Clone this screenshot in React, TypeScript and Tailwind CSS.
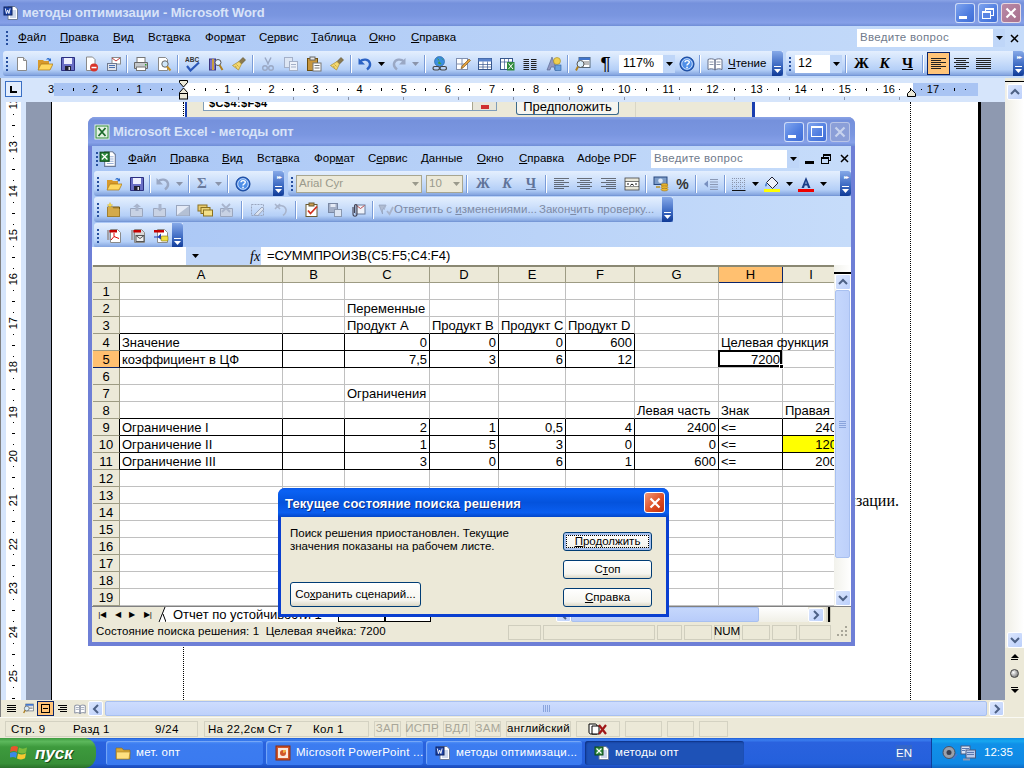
import React from 'react';

const toolbarBg = 'bg-[linear-gradient(to_bottom,#e4effe,#cfe1fb_35%,#b4cff7_75%,#85a6e0_95%,#6d8fd0)]';
const menuBg = 'bg-[linear-gradient(to_right,#a9c6f5,#c6dcfa)]';
const titleBg = 'bg-[linear-gradient(to_bottom,#8aa3e6,#7591dc_12%,#7a96e0_60%,#86a0e8_88%,#6f8dd6)]';
const chevronBg = 'bg-[linear-gradient(to_bottom,#86a9e8,#3f6cc4_55%,#0f3a96)]';
const xpBtn = 'bg-[linear-gradient(to_bottom,#ffffff,#f6f5ef_75%,#dcd8c6)] border border-[#003c74] rounded-[3px]';

const icons: Record<string, React.ReactNode> = {
  doc: (<><path d="M3.5 1.5h6l3 3v10h-9z" fill="#fff" stroke="#8a8a8a" /><path d="M9.5 1.5v3h3" fill="#ddd" stroke="#8a8a8a" /></>),
  open: (<><path d="M1 4h5l1 1h5v3H4l-3 6z" fill="#d89a2c" /><path d="M1 14l3-6h12l-3 6z" fill="#ffd860" stroke="#a8740e" strokeWidth=".7" /><path d="M9 4c1-2.500 3-2.500 4-1l1-1v3.300h-3l1-1.300c-1-.6-2-.5-3 0z" fill="#2f6fcc" /></>),
  save: (<><path d="M1.500 1.500h13v13h-13z" fill="#6a6fc4" stroke="#2b2f80" /><rect x="4" y="2" width="8" height="6" fill="#eef0ff" /><rect x="5" y="10" width="6" height="4.500" fill="#223" /><rect x="8.500" y="11" width="1.500" height="3" fill="#ddd" /></>),
  perm: (<><path d="M3.500 1h6l2.500 2.500v11h-8.500z" fill="#fff" stroke="#8a8a8a" /><circle cx="11" cy="11.500" r="4" fill="#d8342a" /><rect x="8.500" y="10.800" width="5" height="1.500" fill="#fff" /></>),
  mail: (<><rect x="6" y="1.500" width="8.500" height="6.500" fill="#fff" stroke="#8a8a8a" /><path d="M6 2l4 3 4-3" fill="none" stroke="#c04040" /><rect x="1.500" y="7.500" width="9" height="7" fill="#e0e4ec" stroke="#707a90" /><path d="M3 9.500h6M3 11.500h6" stroke="#4a6fb0" /></>),
  print: (<><rect x="4" y="1.500" width="8" height="5" fill="#fff" stroke="#777" /><path d="M1.500 6.500h13v6h-13z" fill="#c4c8cc" stroke="#666" /><rect x="3.500" y="11" width="9" height="3.500" fill="#fff" stroke="#777" /><rect x="12" y="8" width="1.500" height="1.500" fill="#2ca02c" /></>),
  preview: (<><path d="M2.500 1.500h7l2 2v11h-9z" fill="#fff" stroke="#8a8a8a" /><circle cx="9" cy="8" r="3.200" fill="#cfe6fb" stroke="#666" /><path d="M11 10.500l3.500 4" stroke="#c89020" strokeWidth="2" /></>),
  spell: (<><text x="0" y="6" fontSize="6.500" fontWeight="700" fill="#333" fontFamily="Liberation Sans">ABC</text><path d="M2 10l3.500 4.500L14 6.500" fill="none" stroke="#2b57b8" strokeWidth="2.200" /></>),
  research: (<><rect x="1.500" y="3" width="6" height="11" fill="#7a6fc8" stroke="#3c3580" /><rect x="4" y="3" width="2" height="11" fill="#c8a040" /><circle cx="10" cy="6.500" r="3" fill="#e4f0ff" stroke="#555" /><path d="M11.500 9l3 5" stroke="#b08020" strokeWidth="2" /></>),
  brush: (<><path d="M12 1.500l2.500 2.500-4 4-2.500-2.500z" fill="#8a7a50" stroke="#5a4a20" strokeWidth=".6" /><path d="M8 5.500l2.500 2.500-3 6-6-4.500z" fill="#f4d870" stroke="#a88a28" strokeWidth=".7" /><path d="M4 10l2 1.500M5.500 8.500l2 2" stroke="#a88a28" strokeWidth=".6" /></>),
  cut: (<><path d="M5 1.500l3.500 7M11 1.500L7.500 8.500" stroke="#9aa8c4" strokeWidth="1.400" /><circle cx="5" cy="12" r="2.300" fill="none" stroke="#9aa8c4" strokeWidth="1.400" /><circle cx="11" cy="12" r="2.300" fill="none" stroke="#9aa8c4" strokeWidth="1.400" /></>),
  copy: (<><rect x="1.500" y="1.500" width="8" height="10" fill="#dde6f4" stroke="#a4b0c8" /><rect x="6.500" y="5.500" width="8" height="9" fill="#eef2fa" stroke="#a4b0c8" /><path d="M8 8.500h5M8 11h5" stroke="#a4b0c8" /></>),
  paste: (<><rect x="1.500" y="2.500" width="10" height="12" fill="#c8963c" stroke="#6e5010" /><rect x="4" y="1" width="5" height="3" fill="#e8e8e8" stroke="#666" /><rect x="7" y="7" width="8" height="8" fill="#fff" stroke="#777" /><path d="M8.500 9.500h5M8.500 12h5" stroke="#777" /></>),
  undo: (<><path d="M3 5.500c3-3 9-2.500 10 2 .5 2.500-1 4.500-3 6" fill="none" stroke="#2b62c4" strokeWidth="2.400" /><path d="M1.500 2v6.500H8z" fill="#2b62c4" /></>),
  undoOff: (<><path d="M3 5.500c3-3 9-2.500 10 2 .5 2.500-1 4.500-3 6" fill="none" stroke="#9aa8c4" strokeWidth="2.400" /><path d="M1.500 2v6.500H8z" fill="#9aa8c4" /></>),
  redoOff: (<><path d="M13 5.500c-3-3-9-2.500-10 2-.5 2.500 1 4.500 3 6" fill="none" stroke="#9aa8c4" strokeWidth="2.400" /><path d="M14.500 2v6.500H8z" fill="#9aa8c4" /></>),
  link: (<><circle cx="7.500" cy="5.500" r="5" fill="#3a8ee0" stroke="#1c5a9c" strokeWidth=".6" /><path d="M5 2.500c2 0 3 2 1.500 3.500S8 9 9.500 8M8 1.500c1 1 3 1 3.500 3" fill="#40a040" /><rect x="1" y="10.500" width="6.500" height="3.500" rx="1.700" fill="none" stroke="#444" strokeWidth="1.200" /><rect x="8" y="10.500" width="6.500" height="3.500" rx="1.700" fill="none" stroke="#444" strokeWidth="1.200" /></>),
  pencilGrid: (<><rect x="1.500" y="2.500" width="11" height="11" fill="#fff" stroke="#8090b0" /><path d="M1.500 8h11M7 2.500v11" stroke="#8090b0" /><path d="M14 3l1.500 1.500-7 7-2.500 1 1-2.500z" fill="#e0a040" stroke="#7a5010" strokeWidth=".6" /></>),
  table: (<><rect x="1.500" y="2.500" width="13" height="11" fill="#fff" stroke="#36568c" /><rect x="1.500" y="2.500" width="13" height="3" fill="#5a84cc" /><path d="M1.500 8.500h13M1.500 11h13M6 5.500v8M10.500 5.500v8" stroke="#36568c" strokeWidth=".7" /></>),
  xlSmall: (<><rect x="1.500" y="2.500" width="12" height="11" fill="#fff" stroke="#36568c" /><path d="M1.500 6h12M5.500 2.500v11M9.500 2.500v11" stroke="#36568c" strokeWidth=".7" /><rect x="8" y="6" width="7.500" height="8.500" fill="#2f8a3c" /><path d="M9.500 7.500l4.500 5.500M14 7.500L9.500 13" stroke="#fff" /></>),
  columns: (<><path d="M1.500 3.500h5.500M9 3.500h5.500M1.500 5.500h5.500M9 5.500h5.500M1.500 7.500h5.500M9 7.500h5.500M1.500 9.500h5.500M9 9.500h5.500M1.500 11.500h5.500M9 11.500h5.500M1.500 13.500h5.500M9 13.500h5.500" stroke="#222" /></>),
  draw: (<><path d="M6 1L1 14h3l1-3h3l1 3h2z" fill="#9098c0" stroke="#50608c" strokeWidth=".6" /><circle cx="11" cy="5" r="3.500" fill="#f0d050" stroke="#a08820" strokeWidth=".6" /><rect x="9" y="9" width="6" height="5.500" fill="#68a0e0" stroke="#30609c" strokeWidth=".6" /></>),
  map: (<><rect x="4" y="1.500" width="11" height="10" fill="#fff" stroke="#567" /><rect x="4" y="1.500" width="11" height="2.500" fill="#3f74cc" /><path d="M9 6h5M9 8h5" stroke="#777" /><circle cx="5.500" cy="8" r="3.500" fill="#d8ecfa" stroke="#555" /><path d="M3 10.500l-2 4" stroke="#b08020" strokeWidth="2" /></>),
  help: (<><circle cx="8" cy="8" r="7" fill="#2e6fd4" stroke="#123f92" /><circle cx="8" cy="8" r="5.300" fill="#4f8fe8" stroke="#cfe0fa" /><path d="M6 6.300c0-2.300 4.300-2.300 4.300 0 0 1.600-2.300 1.500-2.300 3.200" fill="none" stroke="#fff" strokeWidth="1.400" /><rect x="7.300" y="10.700" width="1.500" height="1.500" fill="#fff" /></>),
  book: (<><path d="M1 3.500c2-1 5-1 7 .5v10c-2-1.500-5-1.500-7-.5zM15 3.500c-2-1-5-1-7 .5v10c2-1.500 5-1.500 7-.5z" fill="#fff" stroke="#66708a" /><path d="M2.500 6h4M2.500 8.500h4M9.500 6h4M9.500 8.500h4" stroke="#8a94aa" /></>),
  folderStar: (<><path d="M1.500 5h12v9.500h-12z" fill="#c09840" stroke="#6e5410" /><path d="M1.500 5h5l1 2h6v7.500h-12z" fill="#d4aa4a" /><path d="M4 .5l.8 2 2 .5-2 .8-.8 2-.8-2-2-.8 2-.5z" fill="#ffe040" stroke="#d0a000" strokeWidth=".3" /></>),
  grayIn: (<><path d="M1.500 6.500h12v8h-12z" fill="#c8d2e4" stroke="#9aa6be" /><path d="M8 1.500L4 5h2.500v4h3V5H12z" fill="#a8b4cc" /></>),
  grayOut: (<><path d="M1.500 6.500h12v8h-12z" fill="#c8d2e4" stroke="#9aa6be" /><path d="M8 9.500L4 6h2.500V2h3v4H12z" fill="#a8b4cc" /></>),
  graySheet: (<><rect x="1.500" y="3.500" width="13" height="10" fill="#e4eaf6" stroke="#9aa6be" /><path d="M2 13l12-9v9.500H2z" fill="#b4c0d4" /></>),
  stack: (<><rect x="1" y="3" width="9" height="6" fill="#e8cc70" stroke="#8a7020" /><rect x="4" y="5.500" width="9" height="6" fill="#ecd478" stroke="#8a7020" /><rect x="6.500" y="8" width="9" height="6" fill="#f4e088" stroke="#8a7020" /></>),
  grayX: (<><path d="M1.500 6.500h12v8h-12z" fill="#c8d2e4" stroke="#9aa6be" /><path d="M3 2l8 8M11 2l-8 8" stroke="#a8b4cc" strokeWidth="1.800" /></>),
  grayEdit: (<><rect x="1.500" y="2.500" width="12" height="11" fill="none" stroke="#9aa6be" strokeDasharray="2 1" /><path d="M4 13l8-8 2 2-6 6.500z" fill="#dde4f0" stroke="#9aa6be" /></>),
  grayUndoX: (<><path d="M3 5.500c3-3 9-2.500 10 2 .5 2.500-1 4.500-3 6" fill="none" stroke="#a8b4cc" strokeWidth="1.600" /><path d="M2 2l5 5M7 2L2 7" stroke="#a8b4cc" strokeWidth="1.500" /></>),
  checkDoc: (<><rect x="2" y="2.500" width="11" height="12" fill="#fff" stroke="#6a5a30" /><rect x="5" y="1" width="5" height="3" fill="#c89a50" stroke="#6a5a30" /><path d="M4 8.500l2.500 3L13 4.500" fill="none" stroke="#d03020" strokeWidth="1.800" /></>),
  saveDoc: (<><rect x="1.500" y="1.500" width="9" height="9" fill="#a4b0c8" stroke="#7a88a4" /><rect x="3.500" y="2" width="5" height="3" fill="#e4eaf6" /><rect x="7.500" y="7.500" width="7" height="7" fill="#dce4f2" stroke="#8a98b0" /></>),
  clipMail: (<><rect x="6" y="3" width="9" height="9" fill="#eef2fa" stroke="#6a7a98" /><path d="M6.500 3.500l4 3 4-3" fill="none" stroke="#c05050" /><path d="M3 5v7c0 3 4 3 4 0V4c0-2-2.500-2-2.500 0v7" fill="none" stroke="#445" strokeWidth="1.100" /></>),
  replyOff: (<><path d="M1 3h7l-3.500 5v4z" fill="#b0bcd2" stroke="#8c98b2" strokeWidth=".6" /><path d="M9 9l2.500 3L15 5" fill="none" stroke="#a8b4cc" strokeWidth="1.800" /><path d="M8 3l-2 5" stroke="#a8b4cc" /></>),
  pdf: (<><path d="M4.500 1.500h7l3 3v10h-10z" fill="#fff" stroke="#8a8a8a" /><rect x="1" y="2" width="10" height="2.500" fill="#c40000" /><rect x="1" y="2" width="2.500" height="10" fill="#a0a0a8" /><path d="M8 5v3.500l-3 3.500M8 8.500l5 2" fill="none" stroke="#e00000" /></>),
  pdfMail: (<><path d="M4.500 1.500h7l3 3v10h-10z" fill="#d8d8d8" stroke="#8a8a8a" /><rect x="1" y="2" width="10" height="2.500" fill="#c40000" /><rect x="1" y="2" width="2.500" height="10" fill="#a0a0a8" /><rect x="6" y="7.500" width="8" height="6" fill="#eee" stroke="#555" /><path d="M6 7.500l4 3 4-3" fill="none" stroke="#555" /></>),
  pdfNote: (<><path d="M4.500 1.500h7l3 3v10h-10z" fill="#fff" stroke="#8a8a8a" /><rect x="1" y="2" width="10" height="2.500" fill="#c40000" /><path d="M1 8.500h4l3-3v6l-3-2H1z" fill="#1c3fb8" /><rect x="8" y="8" width="7" height="5" rx="1" fill="#f0e040" stroke="#807010" strokeWidth=".6" /></>),
  indent: (<><path d="M7 3.500h8M7 6h8M7 8.500h8M7 11h8M7 13.500h8" stroke="#8a98b4" /><path d="M1 8l4-3.500v7z" fill="#7890c0" /></>),
  merge: (<><rect x="1" y="2" width="14" height="12" fill="#e8e6d8" stroke="#444" strokeWidth=".8" /><path d="M1 5.500h14M1 10.500h14" stroke="#444" strokeWidth=".7" /><rect x="2" y="6" width="12" height="4.200" fill="#fff" /><path d="M3 8h2M11 8h2M6.500 9.600c0-1.800 3-1.800 3 0" stroke="#000" fill="none" strokeWidth=".9" /></>),
  money: (<><rect x="1" y="1" width="13" height="7.500" fill="#7c9cc8" stroke="#2a4a80" /><circle cx="7.500" cy="4.700" r="2.300" fill="#dce8f8" /><ellipse cx="11.500" cy="9" rx="3.500" ry="1.400" fill="#f0b830" stroke="#8a6810" strokeWidth=".5" /><ellipse cx="11.500" cy="11.300" rx="3.500" ry="1.400" fill="#f0b830" stroke="#8a6810" strokeWidth=".5" /><ellipse cx="11.500" cy="13.600" rx="3.500" ry="1.400" fill="#f0b830" stroke="#8a6810" strokeWidth=".5" /><path d="M3 11h4" stroke="#b89020" strokeWidth="1.500" /></>),
  borders: (<><path d="M1.500 2v12M5.500 2v12M9.500 2v12M13.500 2v12M1 2.500h13M1 6.500h13M1 10.500h13" stroke="#8a94aa" strokeDasharray="1 1" /><path d="M1 14.500h13.500" stroke="#111" strokeWidth="1.200" /></>),
  fill: (<><path d="M8 1l6 6-5.500 5.500-6-6z" fill="#eef2fa" stroke="#223" /><path d="M2.500 6.500c-2 2-1.500 4-.5 4 1.200 0 1-2.500.5-4z" fill="#3c78d0" /><rect x="0" y="13" width="16" height="3" fill="#ffff00" /></>),
  fontA: (<><path d="M8 1L3.500 12H6l.8-2.500h2.400L10 12h2.500zM7.300 7.800L8 5l.7 2.800z" fill="#1c3f88" /><rect x="0" y="13" width="16" height="3" fill="#ee0000" /></>),
  folderTask: (<><path d="M1 3h6l1.500 2H15v9H1z" fill="#d8a838" stroke="#8a6818" strokeWidth=".6" /><path d="M1.500 7h13.500l-1 7H1.500z" fill="#ffe080" stroke="#a88020" strokeWidth=".6" /></>),
  ppt: (<><rect x="1" y="1" width="14" height="14" fill="#d0562c" stroke="#8a2c10" /><rect x="3" y="3" width="10" height="10" fill="#fbe8dc" /><circle cx="8" cy="8" r="3" fill="#d0562c" /><path d="M8 8V5h3a3 3 0 0 1-3 3z" fill="#f0b040" /></>),
  word: (<><path d="M5 1.500h7l2.500 2.500v10.500H5z" fill="#fff" stroke="#6a7a98" /><path d="M7 6h6M7 8h6M7 10h6M7 12h6" stroke="#9ab0d8" /><rect x="1" y="2" width="8" height="8" fill="#1f45a8" stroke="#0c2260" /><path d="M2.300 3.500l1.200 5 1.200-3.500 1.200 3.500 1.200-5" fill="none" stroke="#fff" strokeWidth=".9" /></>),
  excel: (<><path d="M5 1.500h7l2.500 2.500v10.500H5z" fill="#fff" stroke="#6a7a98" /><path d="M7 6h6M7 8h6M7 10h6M7 12h6" stroke="#9ab0d8" /><rect x="1" y="2" width="8" height="8" fill="#2e8a3e" stroke="#0c4a1a" /><path d="M2.500 3.500l5 5M7.500 3.500l-5 5" stroke="#fff" strokeWidth="1.100" /></>),
  excelTitle: (<><rect x="1" y="1" width="14" height="14" fill="#2e8a3e" stroke="#e8f4e8" /><rect x="2.500" y="2.500" width="11" height="11" fill="#e4f2e4" /><path d="M4.500 4l7 8M11.500 4l-7 8" stroke="#1c6a2c" strokeWidth="1.800" /></>),
  speaker: (<><circle cx="7" cy="7.500" r="6" fill="#9aa0aa" stroke="#4a5060" /><circle cx="7" cy="7.500" r="2.500" fill="#3a4050" /><path d="M11 14l4-5" stroke="#4a78d0" strokeWidth="1.500" /></>),
  net: (<><rect x="1" y="1" width="9" height="8" fill="#d8e4f8" stroke="#4a5a80" /><rect x="6" y="5" width="9.500" height="8" fill="#b8cbec" stroke="#4a5a80" /><path d="M2 3.500h7M2 5.500h3M7 7.500h7M7 9.500h7" stroke="#5a78b0" /><rect x="3" y="13.500" width="7" height="2" fill="#8a98b4" /></>),
};

const Ic = ({ n, size = 'w-4 h-4' }: { n: string; size?: string }) => (
  <svg viewBox="0 0 16 16" className={`${size} block shrink-0`}>{icons[n]}</svg>
);

const Arrow = ({ color = 'fill-black' }: { color?: string }) => (
  <svg viewBox="0 0 7 4" className={`w-[7px] h-[4px] block ${color}`}><path d="M0 0h7L3.500 4z" /></svg>
);

const Grip = () => (
  <div className="flex flex-col gap-[2px] w-[2px] shrink-0">
    {[0, 1, 2, 3].map(i => <div key={i} className="w-[2px] h-[2px] bg-[#274f9e]" />)}
  </div>
);

const Sep = ({ cls = 'mx-[2px]' }: { cls?: string }) => <div className={`w-[2px] h-[18px] border-l border-[#7a9cd8] border-r-white border-r shrink-0 ${cls}`} />;

const Slot = ({ n, w = 'w-[23px]', children }: { n?: string; w?: string; children?: React.ReactNode }) => (
  <div className={`${w} flex justify-center items-center shrink-0`}>{n ? <Ic n={n} /> : children}</div>
);

const Chevron = ({ w = 'w-[11px]', both = false }: { w?: string; both?: boolean }) => (
  <div className={`${w} self-stretch ${chevronBg} rounded-r-[3px] flex flex-col items-center justify-end pb-[3px] gap-[2px] shrink-0`}>
    {both && <div className="text-white text-[6px] leading-[5px] mb-[4px] tracking-[-1px]">▸▸</div>}
    <div className="w-[7px] h-[1px] bg-white" />
    <Arrow color="fill-white" />
  </div>
);

const Mnemonic = ({ t, i }: { t: string; i: number }) => (
  <span>{t.slice(0, i)}<span className="underline underline-offset-1">{t[i]}</span>{t.slice(i + 1)}</span>
);

const Lines = ({ kind }: { kind: 'left' | 'center' | 'right' | 'full' }) => {
  const c = kind === 'left' ? 'items-start' : kind === 'center' ? 'items-center' : kind === 'right' ? 'items-end' : 'items-stretch';
  return (
    <div className={`flex flex-col gap-[1px] w-[15px] ${c}`}>
      {[15, 10, 15, 10, 15, 10].map((w, i) => (
        <div key={i} className={`h-[1px] bg-[#222] ${w === 15 || kind === 'full' ? 'w-[15px]' : 'w-[10px]'}`} />
      ))}
    </div>
  );
};

const SearchBox = ({ w }: { w: string }) => (
  <div className={`${w} h-[18px] bg-white flex items-center pl-[3px] text-[#6f7a8c] text-[11.500px] shrink-0`}>
    <span className="flex-1 tracking-[0.3px]">Введите вопрос</span>
    <div className="w-[12px] h-full bg-[#bfd6f8] flex items-center justify-center"><Arrow /></div>
  </div>
);

const wordMenu: [string, number, string][] = [
  ['Файл', 0, 'w-[42px]'], ['Правка', 0, 'w-[53px]'], ['Вид', 0, 'w-[35px]'], ['Вставка', 3, 'w-[57px]'],
  ['Формат', 3, 'w-[54px]'], ['Сервис', 1, 'w-[52px]'], ['Таблица', 0, 'w-[58px]'], ['Окно', 0, 'w-[42px]'], ['Справка', 0, 'w-[58px]'],
];

const excelMenu: [string, number, string][] = [
  ['Файл', 0, 'w-[42px]'], ['Правка', 0, 'w-[52px]'], ['Вид', 0, 'w-[35px]'], ['Вставка', 3, 'w-[57px]'], ['Формат', 3, 'w-[54px]'],
  ['Сервис', 1, 'w-[53px]'], ['Данные', 0, 'w-[56px]'], ['Окно', 0, 'w-[42px]'], ['Справка', 0, 'w-[58px]'], ['Adobe PDF', 3, 'w-[74px]'],
];

const Menu = ({ items }: { items: [string, number, string][] }) => (
  <>
    {items.map(([t, i, w]) => <div key={t} className={`${w} shrink-0 text-[11.500px] text-black whitespace-nowrap`}><Mnemonic t={t} i={i} /></div>)}
  </>
);

const WinBtn = ({ tone, children }: { tone: string; children: React.ReactNode }) => (
  <div className={`w-[20px] h-[20px] rounded-[3px] border border-white/70 flex items-center justify-center ${tone}`}>{children}</div>
);
const blueBtn = 'bg-[linear-gradient(135deg,#7fa4ee,#4f7de0_60%,#3f6dd6)]';
const fadedRed = 'bg-[linear-gradient(135deg,#b88aa8,#a8708c)]';

const MinIcon = () => <div className="w-[8px] h-[3px] bg-white self-end mb-[3px] mr-[5px]" />;
const RestoreIcon = () => (
  <div className="relative w-[12px] h-[11px]">
    <div className="absolute right-0 top-0 w-[9px] h-[8px] border border-white border-t-2" />
    <div className="absolute left-0 bottom-0 w-[9px] h-[8px] border border-white border-t-2 bg-[#5a86e4]" />
  </div>
);
const CloseIcon = ({ cls = 'stroke-white' }: { cls?: string }) => (
  <svg viewBox="0 0 12 12" className={`w-[12px] h-[12px] ${cls}`}><path d="M1.500 1.500l9 9M10.500 1.500l-9 9" strokeWidth="2.200" fill="none" /></svg>
);

const SmallClose = () => (
  <svg viewBox="0 0 9 9" className="w-[9px] h-[9px] stroke-black"><path d="M1 1l7 7M8 1L1 8" strokeWidth="1.500" /></svg>
);

const ScrollBtn = ({ dir, cls = 'w-[16px] h-[16px]' }: { dir: 'up' | 'down' | 'left' | 'right'; cls?: string }) => {
  const d = dir === 'up' ? 'M2 8l4-4 4 4' : dir === 'down' ? 'M2 4l4 4 4-4' : dir === 'left' ? 'M8 2L4 6l4 4' : 'M4 2l4 4-4 4';
  return (
    <div className={`${cls} rounded-[2px] border border-white bg-[linear-gradient(135deg,#dbe6fd,#bcd0fb)] flex items-center justify-center shrink-0`}>
      <svg viewBox="0 0 12 12" className="w-[12px] h-[12px]"><path d={d} fill="none" stroke="#4d6185" strokeWidth="2" /></svg>
    </div>
  );
};

const hLabels: string[] = ['3', '2', '1', '', '1', '2', '3', '4', '5', '6', '7', '8', '9', '10', '11', '12', '13', '14', '15', '16', '17'];
const vLabels: string[] = ['12', '13', '14', '15', '16', '17', '18', '19', '20', '21', '22', '23', '24', '25'];

const HRuler = () => (
  <div className="h-[24px] bg-[#d6e5fb] border-l border-[#808080] relative shrink-0">
    <div className="absolute left-[4px] top-[3px] w-[17px] h-[16px] bg-[#e4eefd] border border-[#3a6fc4] flex items-center justify-center">
      <div className="w-[7px] h-[7px] border-l-2 border-b-2 border-black" />
    </div>
    <div className="pl-[44.500px] pt-[5px]">
      <div className="flex w-[933px] h-[13px] bg-[linear-gradient(to_right,transparent_7.500px,#a9c4f3_7.500px,#a9c4f3_138px,#ffffff_138px,#ffffff_867px,#a9c4f3_867px,#a9c4f3_932px,transparent_932px)]">
        {hLabels.map((t, i) => (
          <div key={i} className="w-[44.100px] shrink-0 flex text-[11px] leading-[13px] text-black">
            <div className="w-1/4 flex justify-center">{t}</div>
            <div className="w-1/4 flex justify-center items-center"><div className="w-[1px] h-[1px] bg-black" /></div>
            <div className="w-1/4 flex justify-center items-center"><div className="w-[1px] h-[3px] bg-black" /></div>
            <div className="w-1/4 flex justify-center items-center"><div className="w-[1px] h-[1px] bg-black" /></div>
          </div>
        ))}
      </div>
      <div className="flex pl-[192.500px] mt-[1px]">
        {Array.from({ length: 13 }).map((_, i) => <div key={i} className="w-[55.100px] shrink-0 h-[3px] border-l border-[#8a94aa]" />)}
      </div>
    </div>
    {/* indent markers */}
    <svg viewBox="0 0 9 20" className="absolute left-[178px] top-[2px] w-[9px] h-[20px]">
      <path d="M.5.500h8v2L4.500 7 .5 2.500z" fill="#ece9d8" stroke="#000" />
      <path d="M.5 12.500L4.500 8l4 4.500v1H.5z" fill="#ece9d8" stroke="#000" />
      <rect x=".5" y="13.500" width="8" height="5.500" fill="#ece9d8" stroke="#000" />
    </svg>
    <svg viewBox="0 0 9 8" className="absolute left-[906px] top-[11px] w-[9px] h-[8px]">
      <path d="M.5 7.500V4.500L4.500.5l4 4v3z" fill="#ece9d8" stroke="#000" />
    </svg>
  </div>
);

const VRuler = () => (
  <div className="w-[26px] h-full bg-[#d6e5fb] border-l border-[#808080] pl-[5px] pr-[5px] shrink-0 overflow-hidden">
    <div className="h-full bg-white overflow-hidden">
      <div className="-mt-[4.500px]">
        {vLabels.map(t => (
          <div key={t} className="h-[44.100px] flex flex-col text-[11px] text-black">
            <div className="h-1/4 flex justify-center items-center"><span className="[writing-mode:vertical-rl] rotate-180 leading-none">{t}</span></div>
            <div className="h-1/4 flex justify-center items-center"><div className="w-[1px] h-[1px] bg-black" /></div>
            <div className="h-1/4 flex justify-center items-center"><div className="w-[3px] h-[1px] bg-black" /></div>
            <div className="h-1/4 flex justify-center items-center"><div className="w-[1px] h-[1px] bg-black" /></div>
          </div>
        ))}
      </div>
    </div>
  </div>
);

const WordToolbars = () => (
  <div className={`h-[28px] flex items-start pt-[1px] ${menuBg} shrink-0`}>
    <div className={`ml-[3px] w-[780px] h-[25px] flex items-center pl-[3px] rounded-l-[3px] ${toolbarBg}`}>
      <Grip />
      <div className="w-[2px]" />
      <Slot n="doc" /><Slot n="open" /><Slot n="save" /><Slot n="perm" /><Slot n="mail" />
      <Sep cls="mx-[1px]" />
      <Slot n="print" /><Slot n="preview" />
      <Sep cls="mx-[2px]" />
      <Slot n="spell" /><Slot n="research" /><Slot n="brush" />
      <Sep cls="mx-[2px]" />
      <Slot n="cut" /><Slot n="copy" /><Slot n="paste" /><Slot n="brush" />
      <Sep cls="mx-[2px]" />
      <Slot n="undo" w="w-[21px]" /><Slot w="w-[13px]"><Arrow /></Slot>
      <Slot n="redoOff" w="w-[21px]" /><Slot w="w-[12px]"><Arrow color="fill-[#8a94aa]" /></Slot>
      <Sep cls="mx-[3px]" />
      <Slot n="link" w="w-[22px]" /><Slot n="pencilGrid" /><Slot n="table" w="w-[21px]" /><Slot n="xlSmall" /><Slot n="columns" w="w-[24px]" /><Slot n="draw" />
      <Sep cls="mx-[2px]" />
      <Slot n="map" /><Slot w="w-[23px]"><span className="text-[19px] leading-none text-black font-['Liberation_Sans',sans-serif]">¶</span></Slot>
      <div className="w-[56px] h-[18px] bg-white flex items-center pl-[4px] text-[12.500px] text-black ml-[2px] shrink-0">
        <span className="flex-1">117%</span>
        <div className="w-[12px] h-full bg-[#bfd6f8] flex items-center justify-center"><Arrow /></div>
      </div>
      <Slot n="help" />
      <Sep cls="mx-[1px]" />
      <div className="flex items-center gap-[5px] pl-[5px] text-[11.500px] text-black shrink-0 whitespace-nowrap">
        <Ic n="book" /><Mnemonic t="Чтение" i={0} />
      </div>
      <div className="flex-1" />
      <Chevron />
    </div>
    <div className={`ml-[3px] flex-1 h-[25px] flex items-center pl-[3px] rounded-l-[3px] ${toolbarBg}`}>
      <Grip />
      <div className="w-[4px]" />
      <div className="w-[47px] h-[18px] bg-white flex items-center pl-[3px] text-[12.500px] text-black shrink-0">
        <span className="flex-1">12</span>
        <div className="w-[12px] h-full bg-[#bfd6f8] flex items-center justify-center"><Arrow /></div>
      </div>
      <Sep cls="mx-[3px]" />
      <Slot><span className="font-['Liberation_Serif',serif] font-bold text-[15px] leading-none text-black">Ж</span></Slot>
      <Slot><span className="font-['Liberation_Serif',serif] font-bold italic text-[15px] leading-none text-black">К</span></Slot>
      <Slot><span className="font-['Liberation_Serif',serif] font-bold underline text-[15px] leading-none text-black">Ч</span></Slot>
      <Sep cls="mx-[3px]" />
      <div className="w-[23px] h-[23px] bg-[#ffc478] border border-[#0a246a] flex items-center justify-center shrink-0"><Lines kind="left" /></div>
      <Slot w="w-[22px]"><Lines kind="center" /></Slot>
      <Slot w="w-[22px]"><Lines kind="full" /></Slot>
      <div className="flex-1" />
      <Chevron both />
    </div>
  </div>
);

const ExcelToolbars = () => (
  <div className="h-[77px] bg-[linear-gradient(to_right,#a9c6f5,#c6dcfa)] shrink-0 pl-[2px] flex flex-col">
    <div className="h-[26px] flex">
      <div className={`w-[190px] h-[25px] flex items-center pl-[3px] rounded-l-[3px] ${toolbarBg}`}>
        <Grip />
        <div className="w-[3px]" />
        <Slot n="open" /><Slot n="save" />
        <Sep cls="mx-[1px]" />
        <Slot n="undoOff" w="w-[21px]" /><Slot w="w-[13px]"><Arrow color="fill-[#8a94aa]" /></Slot>
        <Sep cls="mx-[2px]" />
        <Slot w="w-[20px]"><span className="font-['Liberation_Serif',serif] font-bold text-[15px] leading-none text-[#6a7a9c]">Σ</span></Slot>
        <Slot w="w-[13px]"><Arrow color="fill-[#8a94aa]" /></Slot>
        <Sep cls="mx-[2px]" />
        <Slot n="help" />
        <div className="flex-1" />
        <Chevron both />
      </div>
      <div className={`ml-[4px] w-[563px] h-[25px] flex items-center pl-[3px] rounded-l-[3px] ${toolbarBg}`}>
        <Grip />
        <div className="w-[3px]" />
        <div className="w-[126px] h-[18px] bg-[#ece9d8] border border-[#a8a690] flex items-center pl-[2px] text-[11.500px] text-[#9a9a8c] shrink-0">
          <span className="flex-1">Arial Cyr</span><div className="w-[12px] flex justify-center"><Arrow color="fill-[#9a9a8c]" /></div>
        </div>
        <div className="w-[37px] h-[18px] ml-[4px] bg-[#ece9d8] border border-[#a8a690] flex items-center pl-[2px] text-[11.500px] text-[#9a9a8c] shrink-0">
          <span className="flex-1">10</span><div className="w-[12px] flex justify-center"><Arrow color="fill-[#9a9a8c]" /></div>
        </div>
        <Sep cls="mx-[3px]" />
        <Slot w="w-[24px]"><span className="font-['Liberation_Serif',serif] font-bold text-[14px] leading-none text-[#5f7399]">Ж</span></Slot>
        <Slot w="w-[24px]"><span className="font-['Liberation_Serif',serif] font-bold italic text-[14px] leading-none text-[#5f7399]">К</span></Slot>
        <Slot w="w-[24px]"><span className="font-['Liberation_Serif',serif] font-bold underline text-[14px] leading-none text-[#5f7399]">Ч</span></Slot>
        <Sep cls="mx-[2px]" />
        <Slot w="w-[24px]"><div className="opacity-60"><Lines kind="left" /></div></Slot>
        <Slot w="w-[23px]"><div className="opacity-60"><Lines kind="center" /></div></Slot>
        <Slot w="w-[24px]"><div className="opacity-60"><Lines kind="right" /></div></Slot>
        <Slot n="merge" />
        <Sep cls="mx-[2px]" />
        <Slot n="money" />
        <Slot w="w-[21px]"><span className="text-[14px] font-bold leading-none text-[#333]">%</span></Slot>
        <Sep cls="mx-[2px]" />
        <Slot n="indent" />
        <Sep cls="mx-[2px]" />
        <Slot n="borders" w="w-[22px]" /><Slot w="w-[10px]"><Arrow /></Slot>
        <Slot n="fill" w="w-[24px]" /><Slot w="w-[10px]"><Arrow /></Slot>
        <Slot n="fontA" w="w-[24px]" /><Slot w="w-[10px]"><Arrow /></Slot>
        <div className="flex-1" />
        <Chevron both />
      </div>
    </div>
    <div className={`w-[579px] h-[25px] flex items-center pl-[3px] rounded-l-[3px] mb-[1px] ${toolbarBg}`}>
      <Grip />
      <div className="w-[3px]" />
      <Slot n="folderStar" /><Slot n="grayIn" /><Slot n="grayOut" /><Slot n="graySheet" /><Slot n="stack" w="w-[22px]" /><Slot n="grayX" w="w-[22px]" />
      <Sep cls="mx-[3px]" />
      <Slot n="grayEdit" /><Slot n="grayUndoX" />
      <Sep cls="mx-[3px]" />
      <Slot n="checkDoc" /><Slot n="saveDoc" /><Slot n="clipMail" />
      <Sep cls="mx-[3px]" />
      <Slot n="replyOff" w="w-[17px]" />
      <span className="text-[11.500px] text-[#7d8aa5] whitespace-nowrap w-[145px] shrink-0">Ответить с <Mnemonic t="изменениями..." i={0} /></span>
      <span className="text-[11.500px] text-[#7d8aa5] whitespace-nowrap"><Mnemonic t="Закончить проверку..." i={5} /></span>
      <div className="flex-1" />
      <Chevron />
    </div>
    <div className={`w-[89px] h-[25px] flex items-center pl-[3px] rounded-l-[3px] ${toolbarBg}`}>
      <Grip />
      <div className="w-[3px]" />
      <Slot n="pdf" w="w-[24px]" /><Slot n="pdfMail" w="w-[23px]" /><Slot n="pdfNote" w="w-[23px]" />
      <div className="flex-1" />
      <Chevron />
    </div>
  </div>
);

type Col = 'A' | 'B' | 'C' | 'D' | 'E' | 'F' | 'G' | 'H' | 'I';
const cols: Col[] = ['A', 'B', 'C', 'D', 'E', 'F', 'G', 'H', 'I'];
const colW: Record<Col, string> = {
  A: 'w-[163px]', B: 'w-[62px]', C: 'w-[85px]', D: 'w-[69px]', E: 'w-[67px]', F: 'w-[69px]', G: 'w-[84px]', H: 'w-[64px]', I: 'w-[57px]',
};
const sheet: Record<number, Partial<Record<Col, string | number>>> = {
  2: { C: 'Переменные' },
  3: { C: 'Продукт A', D: 'Продукт B', E: 'Продукт C', F: 'Продукт D' },
  4: { A: 'Значение', C: 0, D: 0, E: 0, F: 600, H: 'Целевая функция' },
  5: { A: 'коэффициент в ЦФ', C: '7,5', D: 3, E: 6, F: 12, H: 7200 },
  7: { C: 'Ограничения' },
  8: { G: 'Левая часть', H: 'Знак', I: 'Правая' },
  9: { A: 'Ограничение I', C: 2, D: 1, E: '0,5', F: 4, G: 2400, H: '<=', I: 240 },
  10: { A: 'Ограничение II', C: 1, D: 5, E: 3, F: 0, G: 0, H: '<=', I: 120 },
  11: { A: 'Ограничение III', C: 3, D: 0, E: 6, F: 1, G: 600, H: '<=', I: 200 },
};
const boxed = (r: number, c: Col) =>
  ((r === 4 || r === 5) && 'ABCDEF'.includes(c)) || (r >= 9 && r <= 11);

const SheetGrid = () => (
  <div className="w-[741px] h-[341px] overflow-hidden shrink-0">
    <div className="flex h-[18px] border-t-2 border-[#8a8873] bg-[#ece9d8] text-[13px] text-black">
      <div className="w-[27px] shrink-0 border-r border-b border-[#9d9b83]" />
      {cols.map(c => (
        <div key={c} className={`${colW[c]} shrink-0 flex items-center justify-center leading-none ${c === 'H' ? 'bg-[#ffc070] border-r border-b border-[#0a246a]' : 'border-r border-b border-[#9d9b83]'}`}>{c}</div>
      ))}
    </div>
    {Array.from({ length: 19 }).map((_, idx) => {
      const r = idx + 1;
      return (
        <div key={r} className="flex h-[17px] text-[13px] text-black bg-white">
          <div className={`w-[27px] shrink-0 flex items-center justify-center leading-none ${r === 5 ? 'bg-[#ffc070] border-b border-[#0a246a]' : 'bg-[#ece9d8] border-b border-[#9d9b83]'} border-r ${boxed(r, 'A') ? 'border-r-black' : 'border-r-[#9d9b83]'}`}>{r}</div>
          {cols.map(c => {
            const v = sheet[r]?.[c];
            const isNum = typeof v === 'number' || (typeof v === 'string' && /^[\d,]+$/.test(v));
            const bottomBlack = boxed(r, c) || boxed(r + 1, c);
            const rightBlack = boxed(r, c);
            const spill = r === 4 && c === 'H';
            return (
              <div key={c} className={`${colW[c]} shrink-0 relative flex items-center leading-none whitespace-nowrap pt-[1px] border-b ${bottomBlack ? 'border-b-black' : 'border-b-[#c0c0c0]'} ${spill ? '' : 'border-r'} ${rightBlack ? 'border-r-black' : 'border-r-[#c0c0c0]'} ${c === 'I' && r === 10 ? 'bg-[#ffff00]' : ''} ${isNum ? 'justify-end pr-[2px]' : 'pl-[2px]'}`}>
                {v !== undefined && <span className="relative z-10">{v}</span>}
                {r === 5 && c === 'H' && (
                  <>
                    <div className="absolute -left-[1px] -top-[1px] right-0 bottom-0 border-2 border-black" />
                    <div className="absolute -right-[2px] -bottom-[2px] w-[5px] h-[5px] bg-black border border-white z-20" />
                  </>
                )}
              </div>
            );
          })}
        </div>
      );
    })}
  </div>
);

const ExcelWindow = () => (
  <div className="absolute left-[88px] top-[117px] w-[767px] h-[529px] flex flex-col rounded-t-[7px] bg-[#6e7fd6] overflow-hidden">
    <div className={`h-[29px] shrink-0 flex items-center pl-[6px] pr-[5px] ${titleBg}`}>
      <Ic n="excelTitle" />
      <span className="ml-[3px] font-bold text-[13px] text-[#d8e3f8] tracking-[-0.1px] whitespace-nowrap flex-1">Microsoft Excel - методы опт</span>
      <div className="flex gap-[3px]">
        <WinBtn tone={blueBtn}><MinIcon /></WinBtn>
        <WinBtn tone={blueBtn}><div className="w-[12px] h-[11px] border border-white border-t-2" /></WinBtn>
        <div className="w-[20px] h-[20px] rounded-[3px] border border-white/40 flex items-center justify-center bg-[#8b9fd8]"><CloseIcon cls="stroke-[#c7d3ee]" /></div>
      </div>
    </div>
    <div className="flex-1 mx-[4px] mb-[4px] bg-[#ece9d8] flex flex-col min-h-0">
      <div className={`h-[25px] shrink-0 flex items-center pl-[4px] ${menuBg}`}>
        <Grip />
        <div className="ml-[1px]"><Ic n="excel" size="w-[18px] h-[18px]" /></div>
        <div className="w-[11px]" />
        <Menu items={excelMenu} />
        <SearchBox w="w-[148px]" />
        <div className="flex items-center gap-[7px] pl-[6px]">
          <div className="w-[9px] h-[3px] bg-black mt-[8px]" />
          <div className="relative w-[10px] h-[10px]">
            <div className="absolute right-0 top-0 w-[8px] h-[7px] border border-black border-t-2" />
            <div className="absolute left-0 bottom-0 w-[8px] h-[7px] border border-black border-t-2 bg-[#c6dcfa]" />
          </div>
          <div className="ml-[2px]"><SmallClose /></div>
        </div>
      </div>
      <ExcelToolbars />
      <div className="h-[18px] shrink-0 flex items-center bg-[#c0d6f8] -mt-[1px]">
        <div className="w-[94px] h-full bg-white shrink-0" />
        <div className="w-[18px] flex justify-center"><Arrow /></div>
        <div className="w-[57px] pl-[46px]">
          <span className="font-['Liberation_Serif',serif] italic text-[14px] leading-none text-black">fx</span>
        </div>
        <div className="flex-1 h-full bg-white pl-[6px] text-[13px] leading-[18px] text-black whitespace-nowrap">=СУММПРОИЗВ(C5:F5;C4:F4)</div>
      </div>
      <div className="flex h-[341px] shrink-0 bg-white">
        <div className="w-[1px] bg-[#ece9d8] shrink-0" />
        <SheetGrid />
        <div className="w-[17px] shrink-0 bg-[linear-gradient(to_right,#f2f2ec,#ffffff)] flex flex-col items-center">
          <div className="h-[8px] w-full border-b-2 border-black mt-[1px]" />
          <ScrollBtn dir="up" />
          <div className="w-[15px] h-[268px] border border-[#a8c0f0] bg-[linear-gradient(to_right,#c5d7fc,#bdd0fa)] rounded-[2px] flex flex-col items-center justify-center gap-[1px]">
            <div className="w-[7px] h-[1px] bg-[#8aa4dc]" /><div className="w-[7px] h-[1px] bg-[#8aa4dc]" /><div className="w-[7px] h-[1px] bg-[#8aa4dc]" /><div className="w-[7px] h-[1px] bg-[#8aa4dc]" />
          </div>
          <div className="flex-1" />
          <ScrollBtn dir="down" />
        </div>
      </div>
      <div className="h-[16px] shrink-0 flex items-stretch bg-[#ece9d8] border-t border-[#808080]">
        <div className="w-[66px] shrink-0 flex items-center justify-around px-[2px] text-[8px] text-black leading-none">
          <span>|◀</span><span>◀</span><span>▶</span><span>▶|</span>
        </div>
        <svg viewBox="0 0 8 15" className="w-[8px] h-[15px] shrink-0"><path d="M0 15L6 0h2v15z" fill="#fff" /><path d="M1 15L7 0M5 7l3 8" fill="none" stroke="#000" /></svg>
        <div className="w-[172px] shrink-0 text-[13px] leading-[15px] pl-[7px] text-black bg-white whitespace-nowrap overflow-hidden">Отчет по устойчивости 1</div>
        <div className="w-[47px] shrink-0 bg-white border-x border-b border-black" />
        <div className="w-[46px] shrink-0 bg-white border-x border-b border-black" />
        <div className="w-[125px] shrink-0" />
        <div className="mt-[1px]"><ScrollBtn dir="left" cls="w-[15px] h-[14px]" /></div>
        <div className="w-[188px] shrink-0 border border-[#a8c0f0] rounded-[2px] bg-[linear-gradient(to_bottom,#c5d7fc,#b8ccfa)]" />
        <div className="w-[49px] shrink-0 bg-[linear-gradient(to_bottom,#ffffff,#f0efe6)]" />
        <div className="mt-[1px]"><ScrollBtn dir="right" cls="w-[16px] h-[14px]" /></div>
        <div className="w-[2px] ml-[2px] shrink-0 bg-[#d8d6c6]" />
        <div className="w-[2px] shrink-0 bg-black" />
        <div className="flex-1 border-l border-[#c8c6b6]" />
      </div>
      <div className="flex-1 flex items-center bg-[#ece9d8] pl-[4px] pr-[2px] text-[11.500px] text-black whitespace-nowrap">
        <span className="w-[412px] shrink-0 tracking-[0.1px]">Состояние поиска решения: 1&nbsp; Целевая ячейка: 7200</span>
        <div className="flex h-[15px] gap-[2px] items-stretch">
          {['w-[33px]', 'w-[112px]', 'w-[25px]', 'w-[28px]'].map((w, i) => <div key={i} className={`${w} border border-[#d0cebe]`} />)}
          <div className="w-[26px] border border-[#d0cebe] flex items-center justify-center leading-none">NUM</div>
          {['w-[28px]', 'w-[25px]', 'w-[32px]'].map((w, i) => <div key={i} className={`${w} border border-[#d0cebe]`} />)}
        </div>
        <div className="flex-1" />
        <svg viewBox="0 0 12 12" className="w-[12px] h-[12px] fill-[#a8a698] mr-[1px]">
          <rect x="9" y="0" width="2" height="2" /><rect x="9" y="4" width="2" height="2" /><rect x="5" y="4" width="2" height="2" />
          <rect x="9" y="8" width="2" height="2" /><rect x="5" y="8" width="2" height="2" /><rect x="1" y="8" width="2" height="2" />
        </svg>
      </div>
    </div>
  </div>
);

const DlgButton = ({ cls, children, focused = false }: { cls: string; children: React.ReactNode; focused?: boolean }) => (
  <div className={`${cls} ${xpBtn} flex items-center justify-center text-[11.500px] text-black whitespace-nowrap ${focused ? 'shadow-[inset_0_0_0_2px_#a6c0ee]' : ''}`}>
    {focused ? <div className="border border-dotted border-black px-[4px] w-[83px] h-[13px] flex items-center justify-center leading-none">{children}</div> : children}
  </div>
);

const SolverDialog = () => (
  <div className="absolute left-[278px] top-[488px] w-[391px] h-[129px] rounded-t-[7px] bg-[#0a3fd0] flex flex-col overflow-hidden">
    <div className="h-[29px] shrink-0 flex items-center pl-[7px] pr-[4px] bg-[linear-gradient(to_bottom,#0a58e8,#0a62f4_10%,#0453dd_50%,#0a5ef0_85%,#0346c8)]">
      <span className="flex-1 pt-[3px] font-bold text-[13px] text-white tracking-[0.1px] whitespace-nowrap [text-shadow:1px_1px_#0a2a80]">Текущее состояние поиска решения</span>
      <div className="w-[21px] h-[21px] rounded-[3px] border border-white bg-[linear-gradient(135deg,#f09878,#dc4a20_60%,#c03010)] flex items-center justify-center"><CloseIcon /></div>
    </div>
    <div className="flex-1 mx-[3px] mb-[3px] bg-[#ece9d8] flex pl-[9px] pr-[14px] pt-[10px] pb-[7px] min-h-0">
      <div className="flex-1 flex flex-col justify-between min-w-0">
        <p className="text-[11.500px] leading-[13px] text-black whitespace-nowrap">Поиск решения приостановлен. Текущие<br />значения показаны на рабочем листе.</p>
        <DlgButton cls="w-[131px] h-[25px]"><Mnemonic t="Сохранить сценарий..." i={2} /></DlgButton>
      </div>
      <div className="w-[89px] flex flex-col gap-[9px] pt-[5px] shrink-0">
        <DlgButton cls="w-[89px] h-[19px]" focused><Mnemonic t="Продолжить" i={0} /></DlgButton>
        <DlgButton cls="w-[89px] h-[19px]"><Mnemonic t="Стоп" i={1} /></DlgButton>
        <DlgButton cls="w-[89px] h-[19px]"><Mnemonic t="Справка" i={0} /></DlgButton>
      </div>
    </div>
  </div>
);

const WordPage = () => (
  <div className="flex-1 bg-white flex min-w-0">
    <div className="w-[132px] shrink-0 border-r border-dotted border-black" />
    <div className="w-[727px] shrink-0 border-r border-dotted border-black flex flex-col">
      <div className="ml-[1px] w-[570px] h-[15px] bg-[#ece9d8] border-l-2 border-r-[3px] border-[#1a3fb0] flex overflow-hidden shrink-0">
        <div className="ml-[16px] w-[294px] h-[9px] bg-white border border-t-0 border-[#7f9db9] flex overflow-hidden shrink-0">
          <div className="flex-1 pl-[5px] -mt-[5px] text-[11px] leading-[13px] text-black tracking-[0.4px] font-bold">$C$4:$F$4</div>
          <div className="w-[24px] bg-[#e8e6da] border-l border-[#a8a690] flex justify-center"><div className="w-[8px] h-[4px] bg-[#d03030] mt-[3px]" /></div>
        </div>
        <div className="ml-[19px] w-[103px] h-[13px] bg-[#f6f5ef] border border-t-0 border-[#3a6a8c] rounded-b-[3px] text-center text-[13px] leading-[9px] text-black shrink-0 overflow-hidden">Предположить</div>
        <div className="ml-[16px] w-[1px] h-full bg-[#d8d6c6]" />
      </div>
      <div className="mt-[375px] pr-[11px] text-right font-['Liberation_Serif',serif] text-[16px] leading-[18px] text-black whitespace-nowrap">оптимизации.</div>
    </div>
    <div className="flex-1" />
  </div>
);

const WordScrollbar = () => (
  <div className="w-[19px] shrink-0 -mt-[24px] bg-[linear-gradient(to_right,#f0efe6,#ffffff)] flex flex-col items-center relative">
    <div className="w-full h-[4px] bg-[#ece9d8] border-b border-black" />
    <div className="mt-[2px]"><ScrollBtn dir="up" /></div>
    <div className="flex-1" />
    <ScrollBtn dir="down" />
    <div className="h-[52px] w-full bg-[#ece9d8] flex flex-col items-center justify-around py-[2px] text-[9px] leading-none text-black">
      <div className="w-[7px] h-[7px] flex flex-col items-center"><div className="w-0 h-0 border-x-[4px] border-x-transparent border-b-[4px] border-b-black" /><div className="w-[7px] h-[1px] bg-black mt-[1px]" /></div>
      <div className="w-[9px] h-[9px] rounded-full bg-[radial-gradient(circle_at_35%_35%,#ffffff,#555555)] border border-[#444]" />
      <div className="w-[7px] h-[7px] flex flex-col items-center"><div className="w-[7px] h-[1px] bg-black mb-[1px]" /><div className="w-0 h-0 border-x-[4px] border-x-transparent border-t-[4px] border-t-black" /></div>
    </div>
  </div>
);

const ViewBtn = ({ children, active = false }: { children: React.ReactNode; active?: boolean }) => (
  <div className={`w-[17px] h-[15px] flex items-center justify-center shrink-0 ${active ? 'bg-[#ffc478] border border-[#0a246a]' : ''}`}>{children}</div>
);

const HBar = () => (
  <div className="h-[17px] shrink-0 bg-[#ece9d8] flex items-center border-l border-[#808080] pl-[2px]">
    <div className="flex w-[85px] shrink-0 justify-around pr-[3px]">
      <ViewBtn><div className="w-[9px] flex flex-col gap-[1px]"><div className="h-[1px] bg-black" /><div className="h-[1px] bg-black" /><div className="h-[1px] bg-black" /><div className="h-[1px] bg-black" /></div></ViewBtn>
      <ViewBtn><Ic n="map" size="w-[11px] h-[11px]" /></ViewBtn>
      <ViewBtn active><div className="w-[9px] h-[9px] border border-black flex items-center justify-center"><div className="w-[5px] h-[1px] bg-black" /></div></ViewBtn>
      <ViewBtn><div className="w-[9px] flex flex-col gap-[1px] items-end"><div className="h-[1px] w-[9px] bg-black" /><div className="h-[1px] w-[7px] bg-black" /><div className="h-[1px] w-[9px] bg-black" /><div className="h-[1px] w-[7px] bg-black" /></div></ViewBtn>
      <ViewBtn><Ic n="book" size="w-[12px] h-[12px]" /></ViewBtn>
    </div>
    <ScrollBtn dir="left" cls="w-[15px] h-[15px]" />
    <div className="w-[2px]" />
    <div className="w-[882px] h-[15px] shrink-0 border border-[#a8c0f0] rounded-[2px] bg-[linear-gradient(to_bottom,#cddcfd,#bed1fb)] flex items-center justify-center gap-[1px]">
      {[0, 1, 2, 3].map(i => <div key={i} className="w-[1px] h-[7px] bg-[#8aa4dc]" />)}
    </div>
    <div className="w-[2px]" />
    <ScrollBtn dir="right" cls="w-[15px] h-[15px]" />
  </div>
);

const StatusCell = ({ w, off = false, children }: { w: string; off?: boolean; children?: React.ReactNode }) => (
  <div className={`${w} h-[16px] border border-[#d4d2c2] shrink-0 flex items-center justify-center leading-none ${off ? 'text-[#a8a698]' : 'text-black'}`}>{children}</div>
);

const WordStatus = () => (
  <div className="h-[21px] shrink-0 bg-[#ece9d8] border-t border-white/70 pt-[3px] flex items-start pl-[5px] text-[11.500px] text-black whitespace-nowrap tracking-[0.3px]">
    <div className="w-[193px] h-[16px] border border-[#d4d2c2] flex items-center shrink-0 leading-none pt-[1px]">
      <span className="w-[67px] pl-[5px]">Стр. 9</span><span className="w-[82px]">Разд 1</span><span>9/24</span>
    </div>
    <div className="w-[165px] h-[16px] ml-[6px] border border-[#d4d2c2] flex items-center shrink-0 leading-none pt-[1px]">
      <span className="w-[63px] pl-[3px]">На 22,2см</span><span className="w-[45px]">Ст 7</span><span>Кол 1</span>
    </div>
    <div className="flex gap-[5px] ml-[5px] items-start">
      <StatusCell w="w-[27px]" off>ЗАП</StatusCell>
      <StatusCell w="w-[32px]" off>ИСПР</StatusCell>
      <StatusCell w="w-[27px]" off>ВДЛ</StatusCell>
      <StatusCell w="w-[26px]" off>ЗАМ</StatusCell>
      <StatusCell w="w-[65px]">английский</StatusCell>
      <StatusCell w="w-[44px]">
        <svg viewBox="0 0 20 14" className="w-[20px] h-[14px]"><path d="M1 2h6c1 0 2 .5 2 2v8H3c-1 0-2-.5-2-2z" fill="#fff" stroke="#000" /><path d="M4 4h7v8H4z" fill="#fff" stroke="#000" /><path d="M11 3l7 9M18 3l-7 9" stroke="#a01818" strokeWidth="2.200" /></svg>
      </StatusCell>
      <StatusCell w="w-[37px]" /><StatusCell w="w-[27px]" /><StatusCell w="w-[29px]" />
    </div>
  </div>
);

const TaskBtn = ({ n, w, active = false, children }: { n: string; w: string; active?: boolean; children: React.ReactNode }) => (
  <div className={`${w} h-[24px] rounded-[3px] flex items-center pl-[9px] gap-[5px] text-[11.500px] text-white whitespace-nowrap shrink-0 overflow-hidden ${active ? 'bg-[#1e52b7] shadow-[inset_1px_1px_2px_#0c2f80]' : 'bg-[linear-gradient(to_bottom,#4b8cf6,#3c7cf0_15%,#3a7af0)] shadow-[inset_1px_1px_1px_#7aaaf8]'}`}>
    <Ic n={n} />
    <span className="tracking-[0.25px]">{children}</span>
  </div>
);

const Taskbar = () => (
  <div className="h-[30px] shrink-0 flex items-center bg-[linear-gradient(to_bottom,#1f5cd4,#3b7ff0_6%,#2a62de_15%,#2460dc_85%,#1a49b8)]">
    <div className="w-[96px] h-full rounded-r-[12px] bg-[linear-gradient(to_bottom,#3f9c40,#5cb85c_12%,#3d9a3d_30%,#378f37_85%,#2a702a)] flex items-center pl-[10px] gap-[7px] shrink-0">
      <svg viewBox="0 0 18 18" className="w-[18px] h-[18px]">
        <path d="M1 3c2.500-1.500 5-1.500 7 0l-1 5C5 6.800 3 6.800 0 8z" fill="#e8542c" />
        <path d="M9 3.500c2.500 1.500 5 1.500 8 0l-1 5c-2.500 1.300-5 1.300-8-.3z" fill="#7cbc3c" />
        <path d="M0 9c3-1.200 5-1.200 7-.1l-1 5c-2-1.300-4-1.300-7 0z" fill="#3c88e8" />
        <path d="M8 9.500c2.500 1.500 5 1.500 8-.2l-1 5c-2.500 1.500-5 1.500-8 .2z" fill="#f8c830" />
      </svg>
      <span className="font-bold italic text-[17px] leading-none text-white [text-shadow:1px_1px_#1a4a1a]">пуск</span>
    </div>
    <div className="w-[10px] shrink-0" />
    <div className="flex gap-[3px] items-center">
      <TaskBtn n="folderTask" w="w-[157px]">мет. опт</TaskBtn>
      <TaskBtn n="ppt" w="w-[157px]">Microsoft PowerPoint ...</TaskBtn>
      <TaskBtn n="word" w="w-[156px]">методы оптимизаци...</TaskBtn>
      <TaskBtn n="excel" w="w-[159px]" active>методы опт</TaskBtn>
    </div>
    <div className="w-[152px] shrink-0" />
    <div className="w-[16px] h-[16px] bg-[#3466c8] text-white text-[11.500px] leading-[16px] text-center shrink-0">EN</div>
    <div className="w-[19px] shrink-0" />
    <div className="flex-1 h-full flex items-center pl-[10px] gap-[2px] border-l border-[#0e3e9c] bg-[linear-gradient(to_bottom,#0c8ce8,#17a8f0_10%,#1090e8_20%,#0f88e4_85%,#0e6ac4)]">
      <Ic n="speaker" />
      <Ic n="net" />
      <span className="ml-[6px] text-white text-[11.500px]">12:35</span>
    </div>
  </div>
);

export default function App() {
  return (
    <div className="relative w-[1024px] h-[768px] overflow-hidden flex flex-col bg-[#ece9d8] font-['Liberation_Sans',sans-serif]">
      {/* word title */}
      <div className={`h-[26px] shrink-0 flex items-center pl-[3px] pr-[3px] ${titleBg}`}>
        <Ic n="word" />
        <span className="ml-[3px] font-bold text-[13px] text-[#d8e3f8] tracking-[-0.08px] whitespace-nowrap flex-1">методы оптимизации - Microsoft Word</span>
        <div className="flex gap-[3px]">
          <WinBtn tone={blueBtn}><MinIcon /></WinBtn>
          <WinBtn tone={blueBtn}><RestoreIcon /></WinBtn>
          <WinBtn tone={fadedRed}><CloseIcon /></WinBtn>
        </div>
      </div>
      {/* word menu */}
      <div className={`h-[24px] shrink-0 flex items-center pl-[6px] ${menuBg}`}>
        <Grip />
        <div className="w-[10px]" />
        <Menu items={wordMenu} />
        <div className="flex-1" />
        <SearchBox w="w-[148px]" />
        <div className="w-[19px] flex justify-center"><SmallClose /></div>
      </div>
      <WordToolbars />
      <HRuler />
      <div className="h-[598px] shrink-0 flex">
        <VRuler />
        <div className="w-[25px] bg-[#8e99b0] shrink-0" />
        <div className="w-[1px] bg-black shrink-0" />
        <WordPage />
        <div className="w-[3px] bg-black shrink-0" />
        <div className="w-[24px] bg-[#8e99b0] shrink-0" />
        <WordScrollbar />
      </div>
      <HBar />
      <WordStatus />
      <Taskbar />
      <ExcelWindow />
      <SolverDialog />
    </div>
  );
}
